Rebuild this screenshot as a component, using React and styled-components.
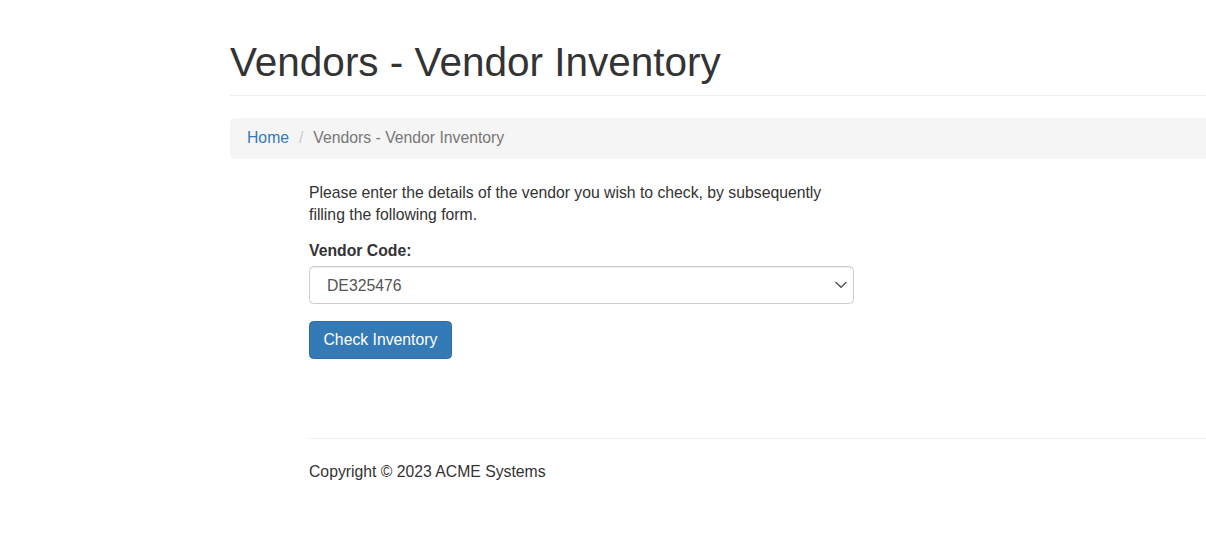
import React from "react";
import styled, { createGlobalStyle } from "styled-components";

const Global = createGlobalStyle`
  html, body { margin: 0; padding: 0; background: #fff; }
  body {
    font-family: "Liberation Sans", Arial, Helvetica, sans-serif;
    font-size: 15.75px;
    line-height: 22.5px;
    color: #333;
    overflow-x: hidden;
  }
  #root { overflow: hidden; }
`;

const Page = styled.div`
  padding-left: 230px;
  margin-right: -20px;
`;

const PageHeader = styled.header`
  padding: 40px 0 10px;
  border-bottom: 1px solid #eee;
`;

const Title = styled.h1`
  margin: 0;
  font-size: 40.5px;
  line-height: 45px;
  font-weight: 500;
  color: #333;
`;

const Breadcrumb = styled.ol`
  list-style: none;
  margin: 22px 0 23px;
  padding: 9px 17px;
  background: #f5f5f5;
  border-radius: 4.5px;
  display: flex;
  align-items: center;
`;

const Crumb = styled.li`
  color: ${(p) => (p.$active ? "#777" : "#337ab7")};
  &:not(:first-child)::before {
    content: "/\\00a0";
    padding: 0 5.6px;
    margin-left: 4.4px;
    color: #ccc;
  }
`;

const CrumbLink = styled.a`
  color: #337ab7;
  text-decoration: none;
`;

const Content = styled.main`
  padding-left: 79px;
`;

const Column = styled.div`
  width: 545px;
`;

const Intro = styled.p`
  margin: 0 0 13px;
`;

const FormGroup = styled.div`
  margin-bottom: 17px;
  display: flex;
  flex-direction: column;
`;

const Label = styled.label`
  font-weight: 700;
  margin-bottom: 4px;
`;

const SelectWrap = styled.div`
  position: relative;
`;

const Select = styled.select`
  appearance: none;
  -webkit-appearance: none;
  width: 100%;
  height: 38px;
  padding: 0 30px 0 17px;
  font-family: inherit;
  font-size: 15.75px;
  color: #555;
  background: #fff;
  border: 1px solid #ccc;
  border-radius: 4.5px;
  box-shadow: inset 0 1px 1px rgba(0, 0, 0, 0.075);
  outline: none;
`;

const Chevron = styled.svg`
  position: absolute;
  right: 7px;
  top: 50%;
  transform: translateY(-50%);
  pointer-events: none;
`;

const Button = styled.button`
  font-family: inherit;
  font-size: 15.75px;
  height: 38px;
  line-height: 36px;
  padding: 0 13.5px;
  color: #fff;
  background: #337ab7;
  border: 1px solid #2e6da4;
  border-radius: 4.5px;
  cursor: pointer;
`;

const Footer = styled.footer`
  margin-top: 79px;
  border-top: 1px solid #eee;
  padding-top: 22px;
`;

const Copy = styled.p`
  margin: 0;
`;

export default function App() {
  return (
    <>
      <Global />
      <Page>
        <PageHeader>
          <Title>Vendors - Vendor Inventory</Title>
        </PageHeader>
        <Breadcrumb>
          <Crumb>
            <CrumbLink href="#">Home</CrumbLink>
          </Crumb>
          <Crumb $active>Vendors - Vendor Inventory</Crumb>
        </Breadcrumb>
        <Content>
          <Column>
            <Intro>
              Please enter the details of the vendor you wish to check, by
              subsequently filling the following form.
            </Intro>
            <FormGroup>
              <Label htmlFor="vendor">Vendor Code:</Label>
              <SelectWrap>
                <Select id="vendor" defaultValue="DE325476">
                  <option value="DE325476">DE325476</option>
                </Select>
                <Chevron width="12" height="8" viewBox="0 0 12 8">
                  <path
                    d="M1 1.5 L6 6.2 L11 1.5"
                    fill="none"
                    stroke="#555"
                    strokeWidth="1.5"
                    strokeLinecap="round"
                    strokeLinejoin="round"
                  />
                </Chevron>
              </SelectWrap>
            </FormGroup>
            <Button type="button">Check Inventory</Button>
          </Column>
          <Footer>
            <Copy>Copyright © 2023 ACME Systems</Copy>
          </Footer>
        </Content>
      </Page>
    </>
  );
}
